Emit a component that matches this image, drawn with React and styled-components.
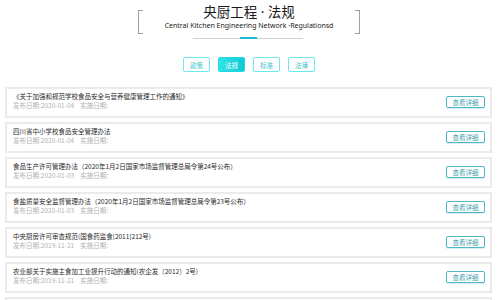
import styled, { createGlobalStyle } from 'styled-components'

const GlobalStyle = createGlobalStyle`
  html, body {
    margin: 0;
    padding: 0;
    background: #ffffff;
    font-family: "Noto Sans", "Noto Sans CJK SC", sans-serif;
  }
`

const Page = styled.div`
  width: 500px;
  height: 300px;
  overflow: hidden;
  padding-top: 10px;
  box-sizing: border-box;
`

const Frame = styled.div`
  position: relative;
  width: 222px;
  height: 23px;
  margin-left: 138px;
  display: flex;
  flex-direction: column;
  align-items: center;

  &::before,
  &::after {
    content: '';
    position: absolute;
    top: 0;
    width: 4px;
    height: 22px;
    border: 1px solid #a0a0a0;
  }
  &::before {
    left: 0;
    border-right: none;
  }
  &::after {
    right: 0;
    border-left: none;
  }
`

const Title = styled.h1`
  margin: -5px 0 0;
  font-size: 13.5px;
  line-height: 15px;
  font-weight: 400;
  color: #1a1a1a;
  font-family: "Noto Sans", "Noto Sans CJK SC", sans-serif;
`

const Subtitle = styled.div`
  margin-top: 2px;
  font-size: 7px;
  line-height: 8px;
  color: #222;
`

const Divider = styled.div`
  position: relative;
  width: 110px;
  height: 1px;
  margin: 5px 0 0 193px;
  background: #cfcfcf;

  &::after {
    content: '';
    position: absolute;
    left: 47px;
    top: -1px;
    width: 17px;
    height: 2px;
    background: #1cb8d4;
  }
`

const Tabs = styled.div`
  display: flex;
  gap: 8px;
  margin: 18px 0 0 183px;
`

const Tab = styled.div`
  width: 27px;
  height: 15px;
  box-sizing: border-box;
  border: 1px solid #5ce6ec;
  border-radius: 2px;
  display: flex;
  align-items: center;
  justify-content: center;
  font-size: 6.5px;
  color: ${(p) => (p.$active ? '#ffffff' : '#3bbfcc')};
  background: ${(p) =>
    p.$active ? 'linear-gradient(90deg, #2fe6e6, #0fc9d6)' : '#ffffff'};
  border-color: ${(p) => (p.$active ? '#1fd8e0' : '#6de8ee')};
  font-family: "Noto Sans CJK SC", sans-serif;
`

const List = styled.div`
  display: flex;
  flex-direction: column;
  gap: 4px;
  margin: 15px 8px 0 5px;
`

const Card = styled.div`
  height: 31px;
  flex-shrink: 0;
  box-sizing: border-box;
  border: 2px solid #ebebeb;
  padding: 3px 5px 0 6px;
  display: flex;
  justify-content: space-between;
  align-items: flex-start;
  overflow: hidden;
`

const Info = styled.div`
  display: flex;
  flex-direction: column;
`

const ItemTitle = styled.div`
  font-size: 6.5px;
  line-height: 9px;
  color: #2a2a2a;
  font-family: "Noto Sans CJK SC", sans-serif;
`

const Dates = styled.div`
  display: flex;
  gap: 6px;
  font-size: 6.5px;
  line-height: 8px;
  color: #b3b3b3;
  font-family: "Noto Sans CJK SC", sans-serif;
`

const DetailButton = styled.button`
  margin-top: 4px;
  width: 39px;
  height: 12px;
  padding: 0;
  box-sizing: border-box;
  border: 1px solid #4fb6c6;
  border-radius: 2px;
  background: #ffffff;
  color: #3f9eae;
  font-size: 6.5px;
  line-height: 10px;
  font-family: "Noto Sans CJK SC", sans-serif;
  box-shadow: 0 1px 1px rgba(79, 182, 198, 0.25);
`

const tabs = ['政策', '法规', '标准', '法律']

const items = [
  { title: '《关于加强和规范学校食品安全与营养健康管理工作的通知》', date: '2020-01-04' },
  { title: '四川省中小学校食品安全管理办法', date: '2020-01-04' },
  { title: '食品生产许可管理办法（2020年1月2日国家市场监督管理总局令第24号公布）', date: '2020-01-03' },
  { title: '食盐质量安全监督管理办法（2020年1月2日国家市场监督管理总局令第23号公布）', date: '2020-01-03' },
  { title: '中央厨房许可审查规范(国食药监食[2011]212号)', date: '2019-11-21' },
  { title: '农业部关于实施主食加工业提升行动的通知(农企发〔2012〕2号)', date: '2019-11-21' },
]

const App = () => {
  return (
    <>
      <GlobalStyle />
      <Page>
        <Frame>
          <Title>央厨工程 · 法规</Title>
          <Subtitle>Central Kitchen Engineering Network ·Regulationsd</Subtitle>
        </Frame>
        <Divider />
        <Tabs>
          {tabs.map((t) => (
            <Tab key={t} $active={t === '法规'}>
              {t}
            </Tab>
          ))}
        </Tabs>
        <List>
          {items.map((item) => (
            <Card key={item.title}>
              <Info>
                <ItemTitle>{item.title}</ItemTitle>
                <Dates>
                  <span>发布日期:{item.date}</span>
                  <span>实施日期:</span>
                </Dates>
              </Info>
              <DetailButton>查看详细</DetailButton>
            </Card>
          ))}
          {/* next row, only its top edge shows at the bottom of the window */}
          <Card />
        </List>
      </Page>
    </>
  )
}

export default App
